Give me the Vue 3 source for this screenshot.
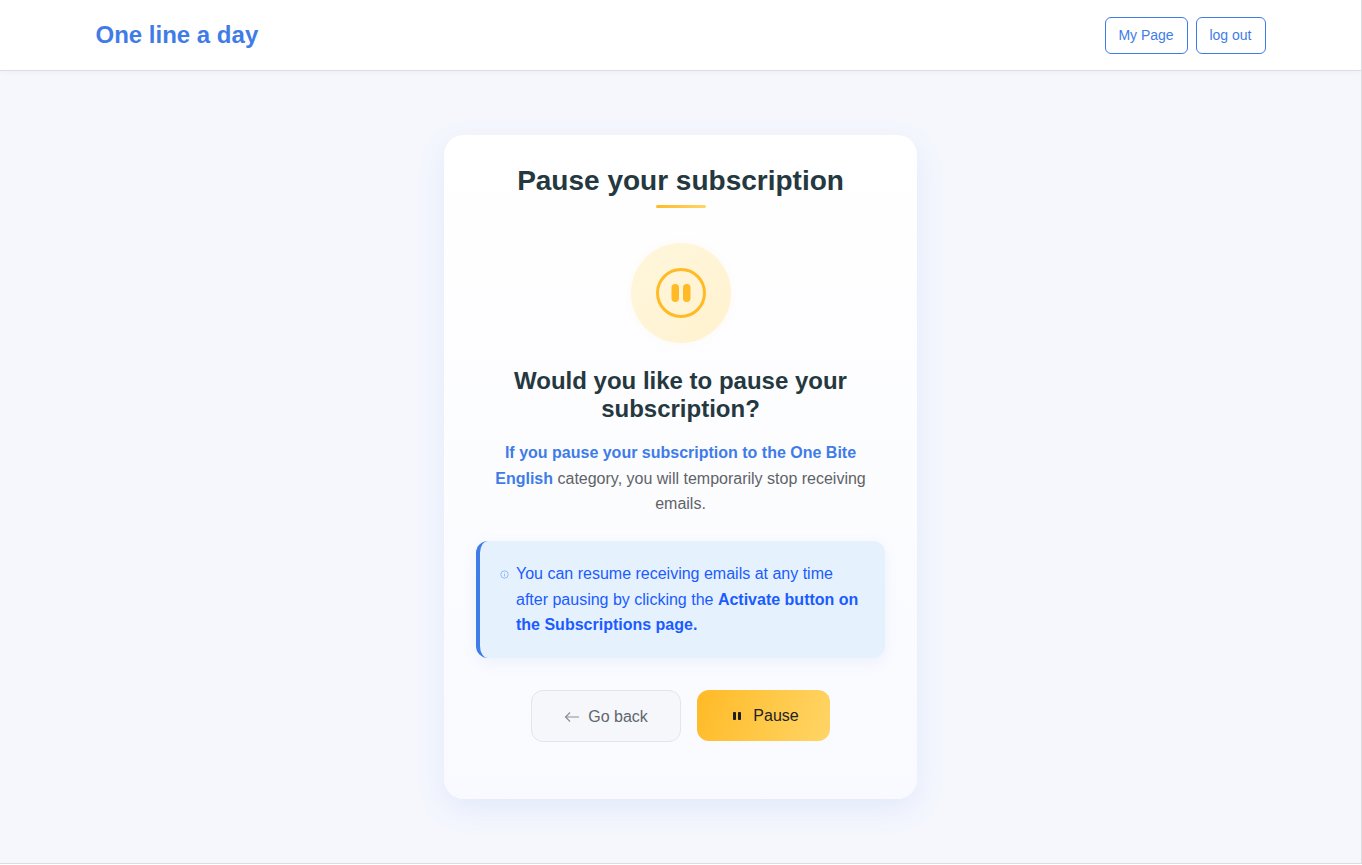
<script setup>
const title = "Pause your subscription";
</script>

<template>
  <div class="page">
    <header class="topbar">
      <div class="topbar-inner">
        <a class="logo">One line a day</a>
        <nav class="nav">
          <button class="nav-btn nav-mypage">My Page</button>
          <button class="nav-btn nav-logout">log out</button>
        </nav>
      </div>
    </header>

    <main class="main">
      <section class="card">
        <h1 class="title">{{ title }}</h1>
        <div class="title-line"></div>

        <div class="icon-circle">
          <svg width="50" height="50" viewBox="0 0 50 50" fill="none">
            <circle cx="25" cy="25" r="23.5" stroke="#ffba26" stroke-width="3" />
            <rect x="15.5" y="16" width="7.5" height="18" rx="3.7" fill="#ffba26" />
            <rect x="27" y="16" width="7.5" height="18" rx="3.7" fill="#ffba26" />
          </svg>
        </div>

        <h2 class="question">Would you like to pause your subscription?</h2>
        <p class="desc">
          <strong>If you pause your subscription to the One Bite English</strong>
          category, you will temporarily stop receiving emails.
        </p>

        <div class="notice">
          <svg class="notice-icon" width="9" height="9" viewBox="0 0 9 9" fill="none">
            <circle cx="4.5" cy="4.5" r="3.7" stroke="#8fb4f5" stroke-width="0.9" />
            <path d="M4.5 4v2.4M4.5 2.5v0.7" stroke="#8fb4f5" stroke-width="0.9" />
          </svg>
          <p class="notice-text">
            You can resume receiving emails at any time after pausing by clicking the
            <strong>Activate button on the Subscriptions page.</strong>
          </p>
        </div>

        <div class="actions">
          <button class="btn btn-back">
            <svg width="16" height="12" viewBox="0 0 16 12" fill="none">
              <path d="M15 6H1.5M6 1.5 1.5 6 6 10.5" stroke="#8a9098" stroke-width="1.2" />
            </svg>
            Go back
          </button>
          <button class="btn btn-pause">
            <svg width="10" height="10" viewBox="0 0 10 10">
              <rect x="1" y="1" width="3" height="8" rx="0.8" fill="#1f1f1f" />
              <rect x="6" y="1" width="3" height="8" rx="0.8" fill="#1f1f1f" />
            </svg>
            Pause
          </button>
        </div>
      </section>
    </main>
  </div>
</template>

<style>
html,
body {
  margin: 0;
  background: #fff;
}
</style>

<style scoped>
.page {
  box-sizing: border-box;
  width: 1362px;
  height: 864px;
  border-right: 1px solid #dcdde1;
  border-bottom: 1px solid #dcdde1;
  background: #f5f7fd;
  font-family: "Liberation Sans", Arial, sans-serif;
  display: flex;
  flex-direction: column;
  overflow: hidden;
}
.topbar {
  background: #fff;
  height: 71px;
  box-sizing: border-box;
  border-bottom: 1px solid #dcdde2;
  flex-shrink: 0;
  box-shadow: 0 2px 6px rgba(30, 40, 90, 0.03);
}
.topbar-inner {
  width: 1170px;
  margin: 0 auto;
  padding-top: 17px;
  display: flex;
  justify-content: space-between;
}
.logo {
  color: #3f7ce8;
  font-size: 24px;
  font-weight: 700;
  line-height: 36px;
}
.nav {
  display: flex;
  gap: 8px;
}
.nav-btn {
  height: 37px;
  padding: 0 0 2px;
  border: 1px solid #3f7ce8;
  border-radius: 6px;
  background: #fff;
  color: #3f7ce8;
  font-family: inherit;
  font-size: 14px;
}
.nav-mypage {
  width: 83px;
}
.nav-logout {
  width: 70px;
}
.main {
  flex: 1;
  display: flex;
  justify-content: center;
  padding-top: 64px;
}
.card {
  box-sizing: border-box;
  width: 473px;
  height: 664px;
  padding: 29px 32px 0;
  border-radius: 20px;
  background: linear-gradient(180deg, #ffffff 0%, #f9faff 100%);
  box-shadow: 0 10px 30px rgba(65, 121, 232, 0.1);
  display: flex;
  flex-direction: column;
  align-items: center;
}
.title {
  margin: 0;
  color: #253840;
  font-size: 28px;
  line-height: 34px;
  font-weight: 700;
}
.title-line {
  width: 50px;
  height: 3px;
  margin-top: 7px;
  border-radius: 2px;
  background: linear-gradient(90deg, #ffba26, #ffd566);
}
.icon-circle {
  width: 100px;
  height: 100px;
  margin-top: 35px;
  border-radius: 50%;
  background: linear-gradient(135deg, #fff6dc, #fff2cf);
  box-shadow: 0 0 10px rgba(255, 186, 38, 0.06);
  display: flex;
  align-items: center;
  justify-content: center;
}
.question {
  margin: 24px 0 0;
  width: 380px;
  color: #253840;
  font-size: 24px;
  line-height: 28px;
  font-weight: 700;
  text-align: center;
}
.desc {
  margin: 17px 0 0;
  width: 380px;
  color: #5f6368;
  font-size: 16px;
  line-height: 25.6px;
  text-align: center;
}
.desc strong {
  color: #3f7ce8;
}
.notice {
  box-sizing: border-box;
  width: 100%;
  margin-top: 24.2px;
  padding: 20px 24px 20px 20px;
  border-left: 4px solid #3f7ce8;
  border-radius: 12px;
  background: #e6f1fe;
  box-shadow: 0 4px 15px rgba(65, 121, 232, 0.08);
  display: flex;
  align-items: flex-start;
  gap: 7px;
}
.notice-icon {
  flex-shrink: 0;
  margin-top: 9px;
}
.notice-text {
  margin: 0;
  color: #1a5cff;
  font-size: 16px;
  line-height: 25.6px;
}
.actions {
  margin-top: 32px;
  display: flex;
  gap: 16px;
}
.btn {
  box-sizing: border-box;
  height: 52px;
  padding: 2px 0 0;
  border-radius: 12px;
  font-family: inherit;
  font-size: 16px;
  display: flex;
  align-items: center;
  justify-content: center;
  gap: 8px;
}
.btn-back {
  width: 150px;
  border: 1px solid #e3e5e9;
  background: #f6f7fa;
  color: #60666e;
}
.btn-pause {
  width: 133px;
  height: 51px;
  padding: 2px 0 0 4px;
  border: none;
  gap: 11px;
  background: linear-gradient(110deg, #ffba26, #ffd566);
  color: #222;
}
</style>
